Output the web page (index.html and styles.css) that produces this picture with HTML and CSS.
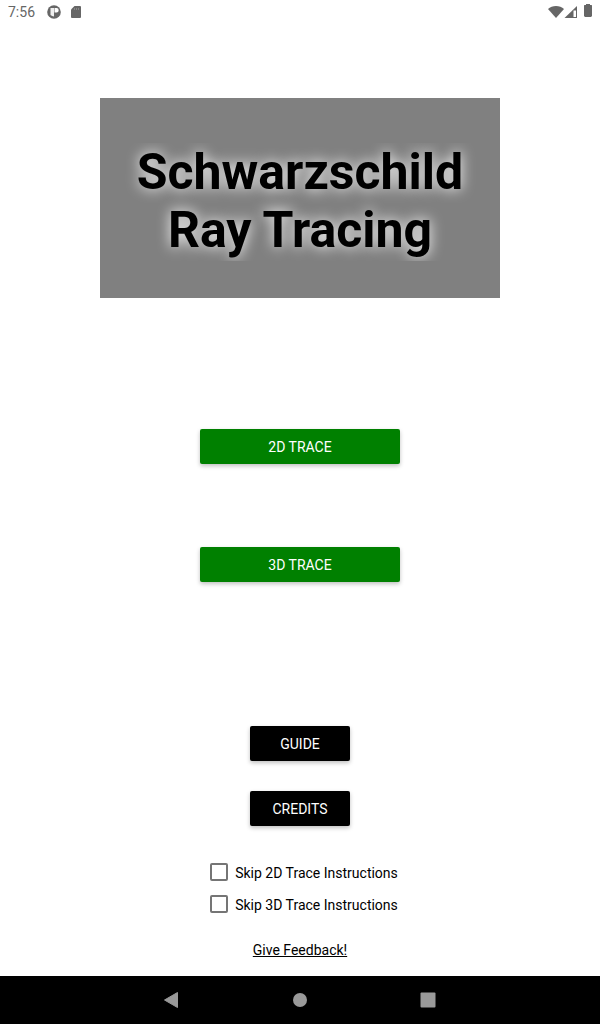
FILE: index.html
```html
<!DOCTYPE html>
<html lang="en">
<head>
<meta charset="utf-8">
<meta name="viewport" content="width=device-width, initial-scale=1">
<title>Schwarzschild Ray Tracing</title>
<link rel="stylesheet" href="styles.css">
</head>
<body>
<header class="status">
  <div class="status-group">
    <span class="clock">7:56</span>
    <svg class="notice" width="14" height="14" viewBox="0 0 14 14" aria-hidden="true"><circle cx="7" cy="7" r="6.800" fill="#666"/><path d="M3.500 3H7v8.500A5 5 0 0 1 3.500 10z" fill="#eee"/><path d="M7.500 3h2a2.200 2.200 0 0 1 0 4.400h-2z" fill="#fff"/></svg>
    <svg width="12" height="14" viewBox="0 0 12 14" aria-hidden="true"><path d="M4.500 1H10a1 1 0 0 1 1 1v10a1 1 0 0 1-1 1H2a1 1 0 0 1-1-1V4.500z" fill="#666"/><path d="M4.500 3v2M6.500 3v2M8.500 3v2" stroke="#888"/></svg>
  </div>
  <svg width="46" height="16" viewBox="0 0 46 16" aria-hidden="true"><path d="M0 5C4 1 12 1 16 5L8 14z" fill="#666"/><path d="M29 2v12H16.500z" fill="#666"/><path d="M25.500 6.500H28V13h-2.500z" fill="#fff"/><path d="M38 0h4v1h1.500l.5.5V12l-1 1h-6l-1-1V1.500l.5-.5H38z" fill="#666"/></svg>
</header>
<main class="screen">
  <div class="banner"><h1 class="title">Schwarzschild<br>Ray Tracing</h1></div>
  <div class="traces">
    <button class="button trace" type="button">2D TRACE</button>
    <button class="button trace" type="button">3D TRACE</button>
  </div>
  <div class="info">
    <button class="button" type="button">GUIDE</button>
    <button class="button" type="button">CREDITS</button>
  </div>
  <div class="options">
    <label class="option"><input class="check" type="checkbox"><span class="option-text">Skip 2D Trace Instructions</span></label>
    <label class="option"><input class="check" type="checkbox"><span class="option-text">Skip 3D Trace Instructions</span></label>
  </div>
  <a class="feedback" href="#feedback">Give Feedback!</a>
</main>
<nav class="navbar">
  <button class="nav-button" type="button" aria-label="Back"><svg width="16" height="16" viewBox="0 0 16 16"><path d="M13.500 0.500v15L.5 8z" fill="#999" stroke="#999" stroke-linejoin="round"/></svg></button>
  <button class="nav-button" type="button" aria-label="Home"><svg width="16" height="16" viewBox="0 0 16 16"><circle cx="8" cy="8" r="7" fill="#999"/></svg></button>
  <button class="nav-button" type="button" aria-label="Recent apps"><svg width="16" height="16" viewBox="0 0 16 16"><rect x=".5" y=".5" width="15" height="15" rx="1" fill="#999"/></svg></button>
</nav>
</body>
</html>
```
FILE: styles.css
```css
* {
  box-sizing: border-box;
}

body {
  margin: 0;
  min-height: 100vh;
  display: flex;
  flex-direction: column;
  background: #fff;
  color: #000;
  font: 14px/16px Roboto, sans-serif;
}

svg {
  display: block;
}

.status {
  display: flex;
  align-items: center;
  justify-content: space-between;
  height: 24px;
  padding: 0 6px 0 8px;
  color: #666;
}

.status-group {
  display: flex;
  align-items: center;
}

.clock {
  min-width: 28px;
}

.notice {
  margin: 0 9px 0 11px;
}

.screen {
  flex: 1;
  display: flex;
  flex-direction: column;
  align-items: center;
  padding: 74px 16px 18px;
}

.banner {
  width: 100%;
  max-width: 400px;
  padding: 45px 0 37px;
  background: #808080;
}

.title {
  margin: 0;
  overflow: hidden;
  padding-bottom: 2px;
  font-size: 50px;
  line-height: 58px;
  font-weight: 700;
  text-align: center;
  text-shadow: 0 0 14px #fff;
}

.traces {
  display: flex;
  flex-direction: column;
  gap: 83px;
  margin-top: 131px;
}

.info {
  display: flex;
  flex-direction: column;
  gap: 30px;
  margin-top: 144px;
}

.button {
  min-width: 100px;
  height: 35px;
  padding: 1px 8px 0;
  border: 0;
  border-radius: 2px;
  background: #000;
  color: #fff;
  font: inherit;
  box-shadow: 0 2px 4px rgba(0, 0, 0, 0.25);
}

.trace {
  min-width: 200px;
  background: #008000;
}

.options {
  display: flex;
  flex-direction: column;
  margin-top: 30px;
}

.option {
  display: flex;
  align-items: center;
  gap: 7px;
  height: 32px;
  margin-right: -8px;
}

.option-text {
  padding-top: 2px;
}

.check {
  appearance: none;
  width: 18px;
  height: 18px;
  margin: 0;
  border: 2px solid #757575;
  border-radius: 2px;
}

.check:checked {
  background: #757575;
}

.feedback {
  margin-top: 22px;
  color: inherit;
}

.navbar {
  display: flex;
  justify-content: center;
  gap: 80px;
  height: 48px;
  background: #000;
}

.nav-button {
  display: flex;
  align-items: center;
  justify-content: center;
  width: 48px;
  padding: 0;
  border: 0;
  background: none;
}
```
